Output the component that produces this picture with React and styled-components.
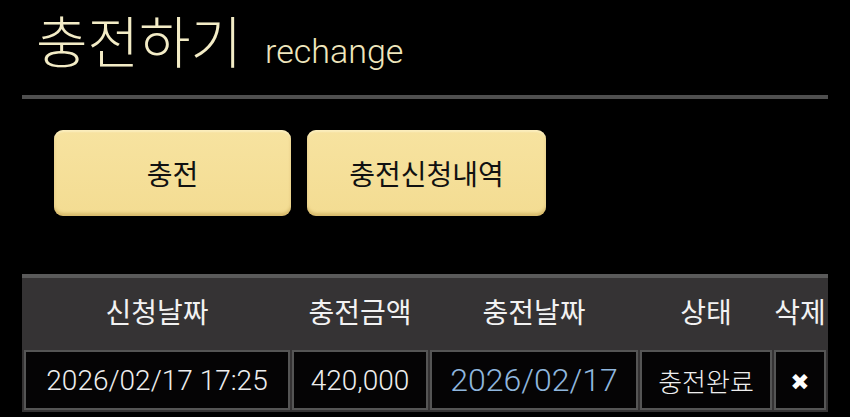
import React from "react";
import styled, { createGlobalStyle } from "styled-components";

const GlobalStyle = createGlobalStyle`
	html, body {
		margin: 0;
		padding: 0;
		background: #000;
	}
	body {
		font-family: Roboto, "Noto Sans CJK KR", sans-serif;
		overflow: hidden;
	}
`;

const Page = styled.div`
	width: 850px;
	height: 417px;
	background: #000;
	padding: 0 22px;
	box-sizing: border-box;
`;

const TitleBar = styled.div`
	display: flex;
	align-items: baseline;
	gap: 23px;
	padding: 0 0 0 14px;
	height: 99px;
	box-sizing: border-box;
	border-bottom: 4px solid #4f4f4f;
`;

const Title = styled.h1`
	margin: 0;
	font-family: "Noto Sans CJK KR", sans-serif;
	font-weight: 300;
	font-size: 56px;
	line-height: 78px;
	color: #f3ecc6;
`;

const SubTitle = styled.span`
	font-family: Roboto, sans-serif;
	font-weight: 300;
	font-size: 34px;
	color: #efe6bd;
`;

const ButtonRow = styled.div`
	display: flex;
	gap: 16px;
	padding: 31px 0 0 32px;
	height: 175px;
	box-sizing: border-box;
`;

const Button = styled.button`
	width: ${props => props.width}px;
	height: 86px;
	border: none;
	border-radius: 9px;
	background: linear-gradient(#f7e3a0, #f3dc92);
	box-shadow: inset 0 -3px 3px rgba(170, 130, 40, 0.35), inset 0 2px 2px rgba(255, 250, 220, 0.5);
	font-family: "Noto Sans CJK KR", sans-serif;
	font-size: 28px;
	font-weight: 400;
	color: #111;
	cursor: pointer;
`;

const Table = styled.table`
	width: 806px;
	table-layout: fixed;
	border-collapse: separate;
	border-spacing: 2px;
	background: #353334;
	border-top: 4px solid #5a5a5a;
	margin: 0;
`;

const HeadCell = styled.th`
	height: 68px;
	padding: 0 0 6px;
	box-sizing: border-box;
	font-family: "Noto Sans CJK KR", sans-serif;
	font-size: 28px;
	font-weight: 400;
	color: #f2f2f2;
	text-align: center;
`;

const Cell = styled.td`
	height: 56px;
	padding: 0;
	background: #050405;
	border: 2px solid #555;
	text-align: center;
	font-family: Roboto, "Noto Sans CJK KR", sans-serif;
	font-weight: 300;
	font-size: ${props => props.size || 28}px;
	color: ${props => props.color || "#eeeeee"};
	white-space: nowrap;
	overflow: hidden;
`;

const DeleteMark = styled.span`
	font-family: "DejaVu Sans", sans-serif;
	font-size: 23px;
	font-weight: bold;
	color: #fff;
`;

const columns = [266, 136, 208, 132, 52];

const App = () => {
	return (
		<Page>
			<GlobalStyle />
			<TitleBar>
				<Title>충전하기</Title>
				<SubTitle>rechange</SubTitle>
			</TitleBar>
			<ButtonRow>
				<Button width={237}>충전</Button>
				<Button width={239}>충전신청내역</Button>
			</ButtonRow>
			<Table>
				<colgroup>
					{columns.map((w, i) => (
						<col key={i} style={{ width: w }} />
					))}
				</colgroup>
				<thead>
					<tr>
						<HeadCell>신청날짜</HeadCell>
						<HeadCell>충전금액</HeadCell>
						<HeadCell>충전날짜</HeadCell>
						<HeadCell>상태</HeadCell>
						<HeadCell>삭제</HeadCell>
					</tr>
				</thead>
				<tbody>
					<tr>
						<Cell>2026/02/17 17:25</Cell>
						<Cell>420,000</Cell>
						<Cell size={32} color="#8fb6de">2026/02/17</Cell>
						<Cell size={26}>충전완료</Cell>
						<Cell><DeleteMark>✖</DeleteMark></Cell>
					</tr>
				</tbody>
			</Table>
		</Page>
	);
};

export default App;
